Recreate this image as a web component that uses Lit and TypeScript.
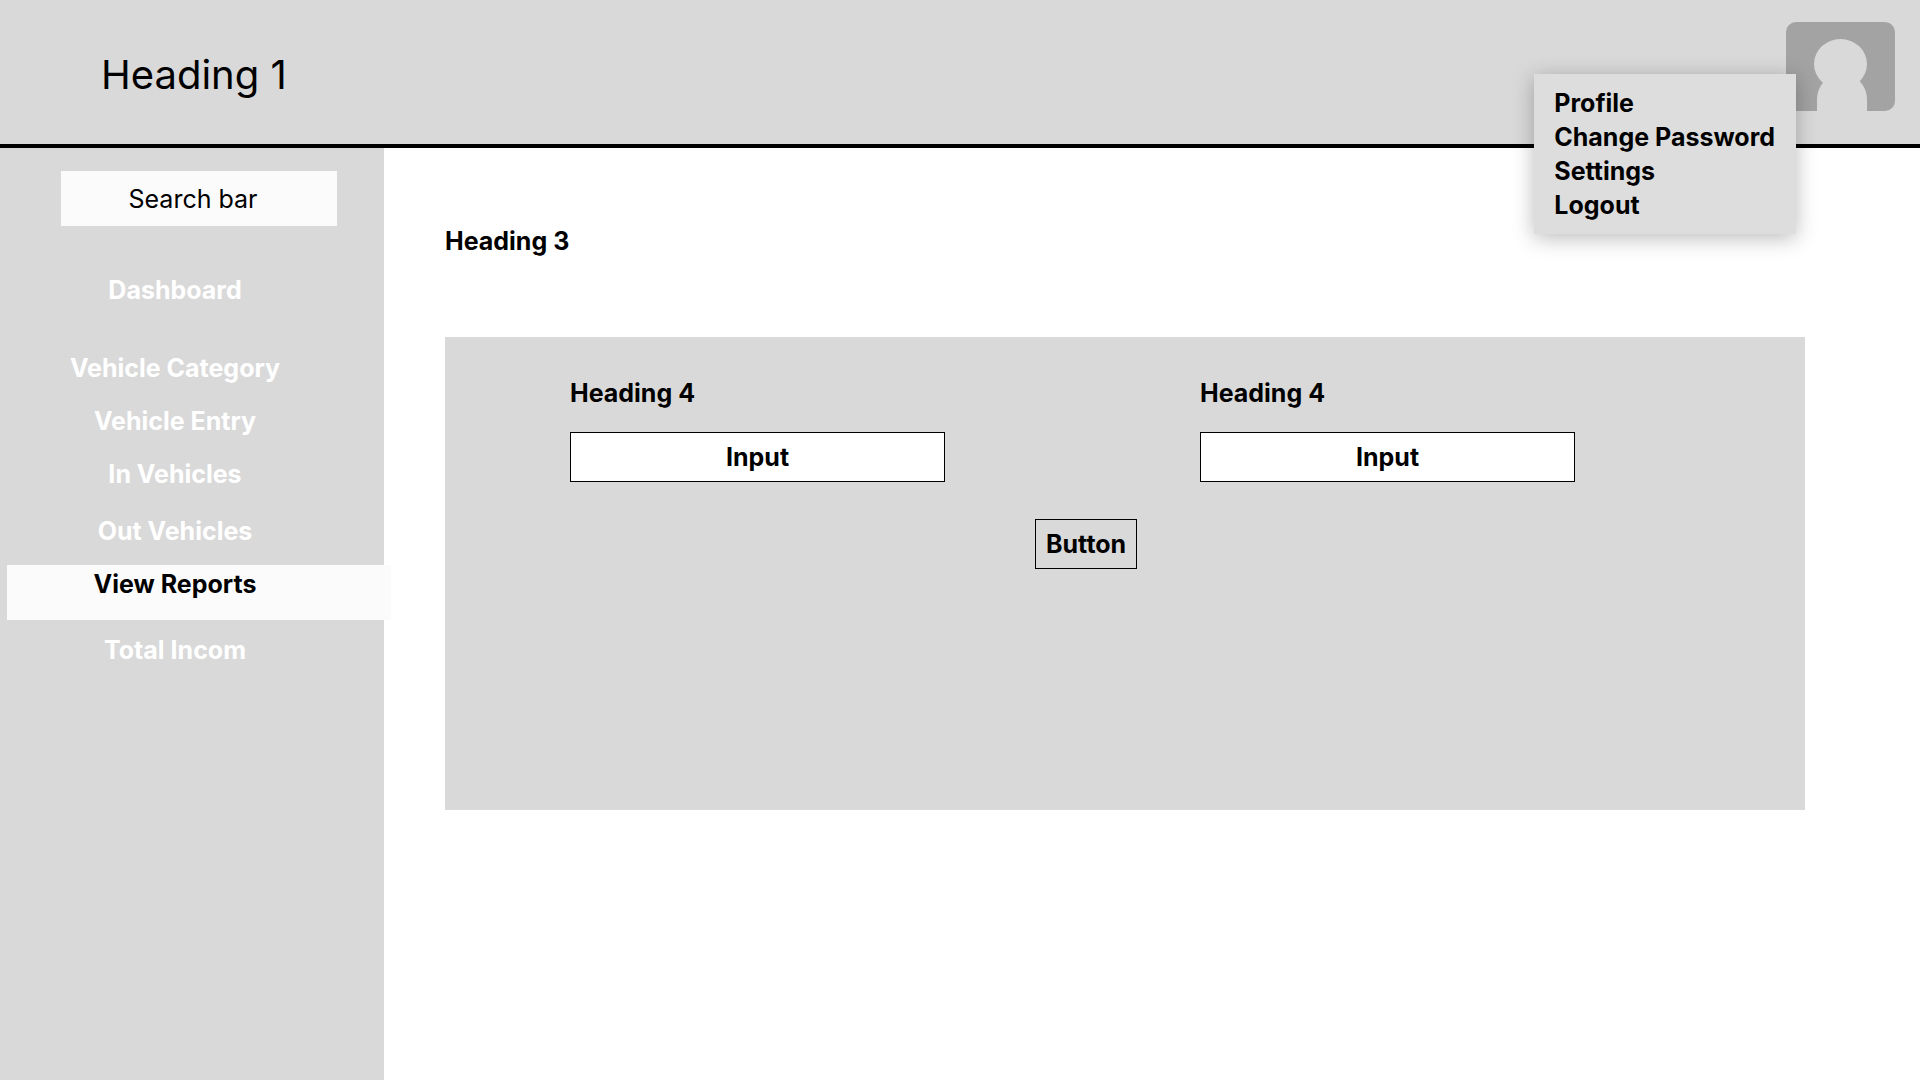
import { LitElement, html, css } from "lit";
import { customElement } from "lit/decorators.js";
import { classMap } from "lit/directives/class-map.js";

interface NavItem {
  label: string;
  kind?: "section" | "group" | "active" | "after";
}

const NAV_ITEMS: NavItem[] = [
  { label: "Dashboard" },
  { label: "Vehicle Category", kind: "section" },
  { label: "Vehicle Entry" },
  { label: "In Vehicles" },
  { label: "Out Vehicles", kind: "group" },
  { label: "View Reports", kind: "active" },
  { label: "Total Incom", kind: "after" },
];

const MENU_ITEMS = ["Profile", "Change Password", "Settings", "Logout"];

@customElement("app-root")
export class AppRoot extends LitElement {
  static styles = css`
    :host {
      display: flex;
      flex-direction: column;
      min-height: 100vh;
      background: #fff;
      color: #000;
      font-family: Inter, "Liberation Sans", sans-serif;
      font-size: 25px;
      line-height: 30px;
      font-weight: 700;
    }
    * {
      box-sizing: border-box;
    }
    h1,
    h2,
    ul {
      margin: 0;
      padding: 0;
      font: inherit;
      list-style: none;
    }
    a {
      color: inherit;
      text-decoration: none;
    }
    input,
    button {
      margin: 0;
      border-radius: 0;
      color: inherit;
      font: inherit;
      text-align: center;
    }
    .header {
      position: relative;
      display: flex;
      justify-content: space-between;
      align-items: flex-start;
      height: 148px;
      padding: 22px 25px 0 101px;
      background: #d9d9d9;
      border-bottom: 4px solid #000;
    }
    .title {
      padding-top: 29px;
      font-size: 40px;
      line-height: 48px;
      font-weight: 400;
    }
    .avatar {
      display: block;
      padding: 0;
      border: 0;
      background: none;
    }
    .avatar-icon {
      display: block;
    }
    .menu {
      position: absolute;
      top: 74px;
      right: 124px;
      padding: 12px 21px 12px 20px;
      background: #ddd;
      box-shadow: 0 4px 20px rgba(0, 0, 0, 0.27);
      line-height: 34px;
    }
    .menu-link {
      display: block;
    }
    .body {
      display: flex;
      flex: 1;
    }
    .sidebar {
      width: 20%;
      padding-top: 23px;
      background: #d9d9d9;
    }
    .search {
      display: block;
      width: calc(100% - 108px);
      height: 55px;
      margin: 0 47px 49px 61px;
      padding: 0 12px 0 0;
      border: 0;
      background: #fbfbfb;
      font-weight: 400;
    }
    .search::placeholder {
      color: #000;
      opacity: 1;
    }
    .nav-item {
      margin-top: 23px;
      padding-right: 34px;
      color: #fff;
      text-align: center;
    }
    .nav-item:first-child {
      margin-top: 0;
    }
    .nav-item.section {
      margin-top: 48px;
    }
    .nav-item.group {
      margin-top: 27px;
    }
    .nav-item.active {
      height: 55px;
      margin: 19px -7px 0 7px;
      padding: 4px 48px 0 0;
      background: #fbfbfb;
      color: #000;
    }
    .nav-item.after {
      margin-top: 15px;
    }
    .main {
      flex: 1;
      padding: 78px 115px 78px 61px;
    }
    .panel {
      display: grid;
      grid-template-columns: 125fr 375fr 255fr 375fr 230fr;
      align-content: start;
      row-gap: 37px;
      min-height: 473px;
      margin-top: 81px;
      padding-top: 41px;
      background: #d9d9d9;
    }
    .field {
      display: flex;
      flex-direction: column;
      gap: 24px;
      grid-column: 2;
    }
    .field.second {
      grid-column: 4;
    }
    .field-input {
      width: 100%;
      height: 50px;
      padding: 0;
      border: 1px solid #000;
      background: #fff;
    }
    .submit {
      grid-column: 3;
      justify-self: start;
      height: 50px;
      margin-left: 90px;
      padding: 0 10px;
      border: 1px solid #000;
      background: none;
    }
  `;

  render() {
    return html`
      <header class="header">
        <h1 class="title">Heading 1</h1>
        <button class="avatar" type="button" aria-label="Account">
          <svg class="avatar-icon" width="109" height="89" viewBox="0 0 109 89" aria-hidden="true">
            <rect width="109" height="89" rx="10" fill="#a3a3a3" />
            <ellipse cx="54.5" cy="42" rx="26.5" ry="25" fill="#d9d9d9" />
            <path d="M31 89V77a25 25 0 0 1 50 0v12z" fill="#d9d9d9" />
          </svg>
        </button>
        <ul class="menu">
          ${MENU_ITEMS.map((item) => html`<li><a class="menu-link" href="#">${item}</a></li>`)}
        </ul>
      </header>
      <div class="body">
        <aside class="sidebar">
          <input class="search" type="text" placeholder="Search bar" aria-label="Search bar" />
          <nav>
            <ul>
              ${NAV_ITEMS.map(
                ({ label, kind }) => html`
                  <li class=${classMap({ "nav-item": true, [kind ?? "plain"]: true })}>
                    <a href="#">${label}</a>
                  </li>
                `
              )}
            </ul>
          </nav>
        </aside>
        <main class="main">
          <h2>Heading 3</h2>
          <form class="panel">
            <div class="field">
              <label for="first">Heading 4</label>
              <input class="field-input" id="first" type="text" value="Input" />
            </div>
            <div class="field second">
              <label for="second">Heading 4</label>
              <input class="field-input" id="second" type="text" value="Input" />
            </div>
            <button class="submit" type="button">Button</button>
          </form>
        </main>
      </div>
    `;
  }
}
